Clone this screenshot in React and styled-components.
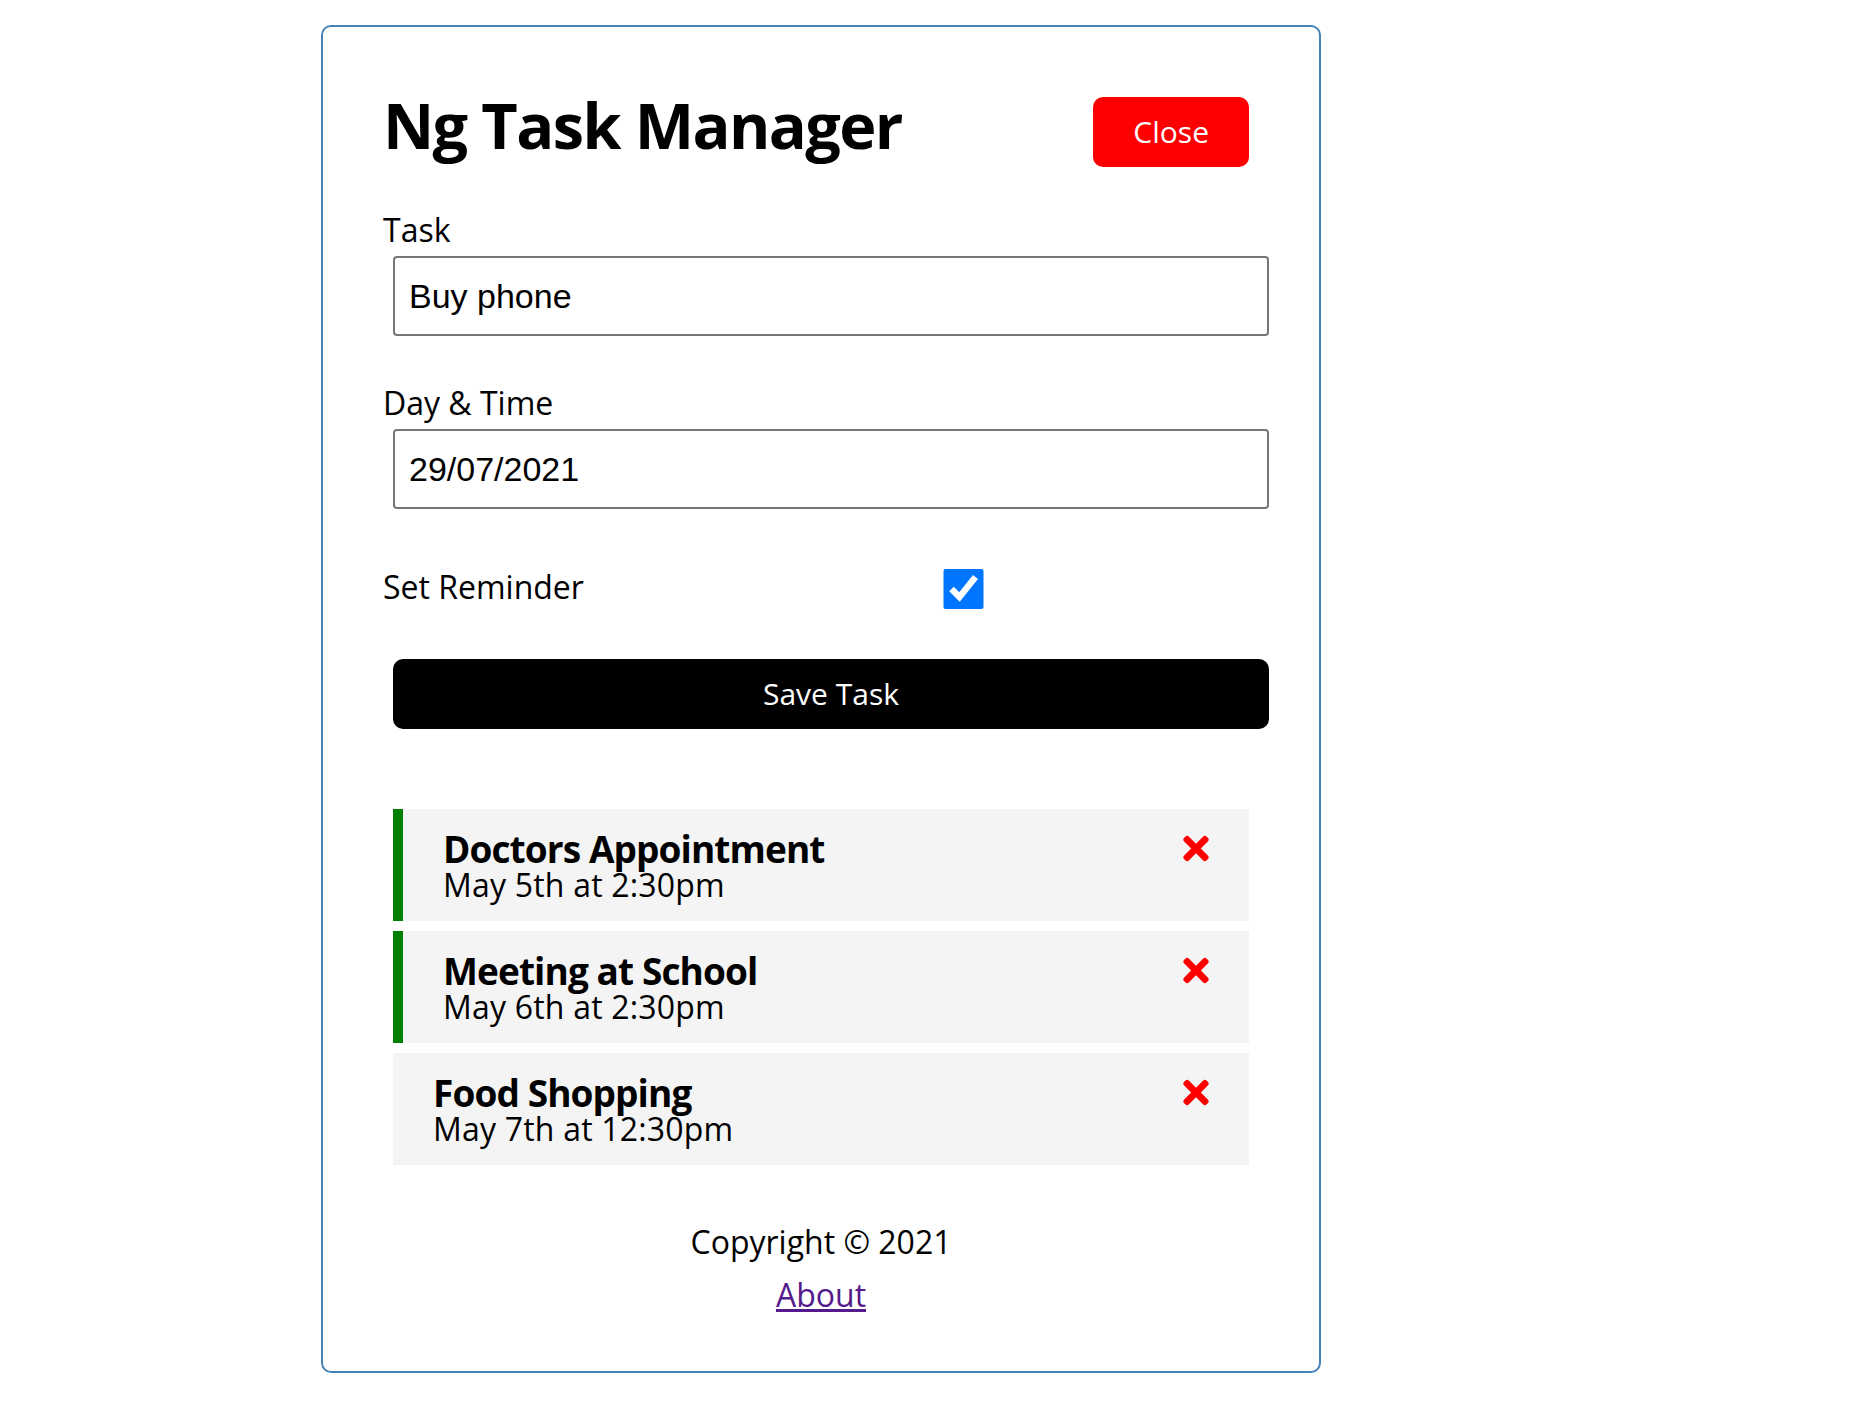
import React, { useState } from 'react';
import styled, { createGlobalStyle } from 'styled-components';
import { FaTimes } from 'react-icons/fa';

const GlobalStyle = createGlobalStyle`
  * {
    box-sizing: border-box;
    margin: 0;
    padding: 0;
  }
  body {
    font-family: "Open Sans", "Noto Sans", sans-serif;
    background: #fff;
    color: #000;
  }
`;

const Container = styled.div`
  width: 1000px;
  margin: 25px 0 0 321px;
  border: 2px solid steelblue;
  border-radius: 10px;
  padding: 60px;
  line-height: 1.05;
`;

const Header = styled.header`
  display: flex;
  justify-content: space-between;
  align-items: center;
  margin-bottom: 36px;
`;

const Title = styled.h1`
  font-size: 63px;
  font-weight: 700;
  line-height: 1.05;
  letter-spacing: -1.6px;
  padding-bottom: 14px;
`;

const Button = styled.button`
  display: ${(p) => (p.$block ? 'block' : 'inline-block')};
  width: ${(p) => (p.$block ? '100%' : 'auto')};
  background: ${(p) => p.$bg || '#000'};
  color: #fff;
  border: none;
  padding: 20px 40px;
  margin: 10px;
  border-radius: 10px;
  cursor: pointer;
  font-size: 30px;
  font-family: inherit;
  line-height: 30px;
`;

const Form = styled.form`
  margin-bottom: 80px;
`;

const FormControl = styled.div`
  margin: 40px 0;

  &:first-child {
    margin-top: 0;
  }
`;

const CheckControl = styled(FormControl)`
  display: flex;
  align-items: center;
  justify-content: space-between;
`;

const Label = styled.label`
  display: block;
  font-size: 32px;
  line-height: 33px;
`;

const CheckLabel = styled(Label)`
  flex: 1;
  padding-bottom: 6px;
`;

const TextInput = styled.input`
  display: inline-block;
  vertical-align: top;
  width: 100%;
  height: 80px;
  margin: 10px;
  padding: 6px 14px;
  font-size: 34px;
  font-family: "Liberation Sans", Arial, sans-serif;
  border: 2px solid #767676;
  border-radius: 4px;
  color: #000;
`;

const CheckInput = styled.input`
  flex: 2;
  height: 40px;
  margin: 10px;
  accent-color: #0075ff;
`;

const TaskItem = styled.div`
  background: #f4f4f4;
  margin: 10px;
  padding: 20px 40px;
  cursor: pointer;
  border-left: ${(p) => (p.$reminder ? '10px solid green' : 'none')};
`;

const TaskTitle = styled.h3`
  display: flex;
  align-items: center;
  justify-content: space-between;
  font-size: 37px;
  font-weight: 700;
  line-height: 39px;
  letter-spacing: -0.9px;

  svg {
    width: 26px;
    height: 37px;
    color: red;
    cursor: pointer;
  }
`;

const TaskDay = styled.p`
  font-size: 32px;
  line-height: 33px;
  letter-spacing: 0.2px;
`;

const Footer = styled.footer`
  margin-top: 60px;
  text-align: center;
  font-size: 32px;
  line-height: 33px;
`;

const Copyright = styled.p`
  margin-bottom: 20px;
`;

const AboutLink = styled.a`
  color: #551a8b;
  text-decoration: underline;
`;

const tasks = [
  { id: 1, text: 'Doctors Appointment', day: 'May 5th at 2:30pm', reminder: true },
  { id: 2, text: 'Meeting at School', day: 'May 6th at 2:30pm', reminder: true },
  { id: 3, text: 'Food Shopping', day: 'May 7th at 12:30pm', reminder: false },
];

export default function App() {
  const [text, setText] = useState('Buy phone');
  const [day, setDay] = useState('29/07/2021');
  const [reminder, setReminder] = useState(true);

  return (
    <>
      <GlobalStyle />
      <Container>
        <Header>
          <Title>Ng Task Manager</Title>
          <Button $bg="red">Close</Button>
        </Header>

        <Form onSubmit={(e) => e.preventDefault()}>
          <FormControl>
            <Label htmlFor="text">Task</Label>
            <TextInput id="text" type="text" value={text} onChange={(e) => setText(e.target.value)} />
          </FormControl>
          <FormControl>
            <Label htmlFor="day">Day &amp; Time</Label>
            <TextInput id="day" type="text" value={day} onChange={(e) => setDay(e.target.value)} />
          </FormControl>
          <CheckControl>
            <CheckLabel htmlFor="reminder">Set Reminder</CheckLabel>
            <CheckInput
              id="reminder"
              type="checkbox"
              checked={reminder}
              onChange={(e) => setReminder(e.target.checked)}
            />
          </CheckControl>
          <Button $block type="submit">Save Task</Button>
        </Form>

        {tasks.map((task) => (
          <TaskItem key={task.id} $reminder={task.reminder}>
            <TaskTitle>
              {task.text}
              <FaTimes />
            </TaskTitle>
            <TaskDay>{task.day}</TaskDay>
          </TaskItem>
        ))}

        <Footer>
          <Copyright>Copyright &copy; 2021</Copyright>
          <AboutLink href="#about">About</AboutLink>
        </Footer>
      </Container>
    </>
  );
}
